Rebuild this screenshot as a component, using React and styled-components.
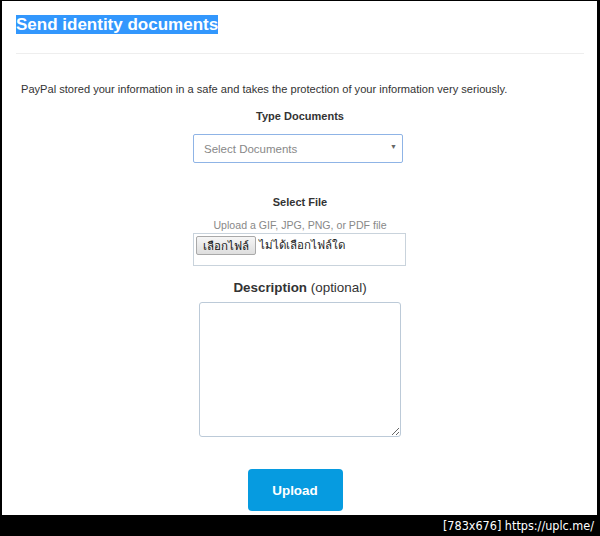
import React from 'react'
import styled, { createGlobalStyle } from 'styled-components'

const GlobalStyle = createGlobalStyle`
    html, body {
        margin: 0;
        padding: 0;
        background: #000;
    }
    * {
        box-sizing: border-box;
    }
`

const Screen = styled.div`
    width: 600px;
    height: 536px;
    display: flex;
    flex-direction: column;
    background: #000;
    font-family: "Liberation Sans", Arial, sans-serif;
`

const Panel = styled.div`
    flex: 1;
    margin: 1px 3px 0 2px;
    background: #fff;
    padding: 14px 13px 0 14px;
    display: flex;
    flex-direction: column;
`

const Title = styled.h1`
    margin: 0;
    font-size: 17px;
    line-height: 20px;
    font-weight: bold;
    color: #fff;

    span {
        background: #3297fd;
    }
`

const Rule = styled.hr`
    margin: 18px 0 0;
    border: 0;
    border-top: 1px solid #eee;
`

const Intro = styled.p`
    margin: 27px 0 0 5px;
    font-size: 11.1px;
    line-height: 16px;
    color: #333;
`

const Form = styled.form`
    display: flex;
    flex-direction: column;
    align-items: center;
`

const Label = styled.div`
    margin-top: ${props => props.gap}px;
    font-size: 11px;
    line-height: 16px;
    font-weight: bold;
    color: #333;
`

const SelectWrap = styled.div`
    position: relative;
    margin: 10px 4px 0 0;
    width: 210px;
    height: 29px;

    &::after {
        content: '▼';
        position: absolute;
        right: 6px;
        top: 9px;
        font-size: 7px;
        color: #666;
        pointer-events: none;
    }
`

const Select = styled.select`
    appearance: none;
    width: 100%;
    height: 100%;
    padding: 0 10px;
    border: 1px solid #8fb4e6;
    border-radius: 2px;
    background: #fff;
    font-family: inherit;
    font-size: 11.5px;
    color: #888;
    outline: none;
`

const Hint = styled.div`
    margin-top: 8px;
    font-size: 10.6px;
    line-height: 14px;
    color: #888;
`

const FileBox = styled.div`
    margin: 1px 2px 0 0;
    width: 213px;
    height: 33px;
    border: 1px solid #c9d3dc;
    padding: 2px 2px;
    display: flex;
    align-items: flex-start;
    gap: 3px;
    font-size: 11px;
    color: #222;
`

const FileButton = styled.button`
    height: 19px;
    padding: 0 6px;
    border: 1px solid #a9a9a9;
    border-radius: 2px;
    background: linear-gradient(#f6f6f6, #dedede);
    font-family: inherit;
    font-size: 11.5px;
    color: #111;
`

const FileName = styled.span`
    line-height: 19px;
    font-size: 11.5px;
`

const DescLabel = styled.div`
    margin-top: 13px;
    font-size: 13.4px;
    line-height: 18px;
    color: #333;

    b {
        font-weight: bold;
    }
`

const TextArea = styled.textarea`
    margin-top: 5px;
    width: 202px;
    height: 135px;
    border: 1px solid #bccad8;
    border-radius: 3px;
    resize: both;
    outline: none;
`

const UploadButton = styled.button`
    margin: 32px 10px 0 0;
    width: 95px;
    height: 42px;
    border: 0;
    border-radius: 4px;
    background: #069be0;
    color: #fff;
    font-family: inherit;
    font-size: 13.4px;
    font-weight: bold;
`

const Footer = styled.div`
    height: 21px;
    padding-right: 6px;
    display: flex;
    align-items: center;
    justify-content: flex-end;
    font-family: "DejaVu Sans Condensed", "DejaVu Sans", sans-serif;
    font-size: 12.5px;
    color: #fff;
`

const App = () => (
    <Screen>
        <GlobalStyle />
        <Panel>
            <Title><span>Send identity documents</span></Title>
            <Rule />
            <Intro>PayPal stored your information in a safe and takes the protection of your information very seriously.</Intro>
            <Form onSubmit={e => e.preventDefault()}>
                <Label gap={11}>Type Documents</Label>
                <SelectWrap>
                    <Select defaultValue="">
                        <option value="" disabled>Select Documents</option>
                        <option value="passport">Passport</option>
                        <option value="id">ID Card</option>
                    </Select>
                </SelectWrap>
                <Label gap={31}>Select File</Label>
                <Hint>Upload a GIF, JPG, PNG, or PDF file</Hint>
                <FileBox>
                    <FileButton type="button">เลือกไฟล์</FileButton>
                    <FileName>ไม่ได้เลือกไฟล์ใด</FileName>
                </FileBox>
                <DescLabel><b>Description</b> (optional)</DescLabel>
                <TextArea />
                <UploadButton type="submit">Upload</UploadButton>
            </Form>
        </Panel>
        <Footer>[783x676] https://uplc.me/</Footer>
    </Screen>
)

export default App
